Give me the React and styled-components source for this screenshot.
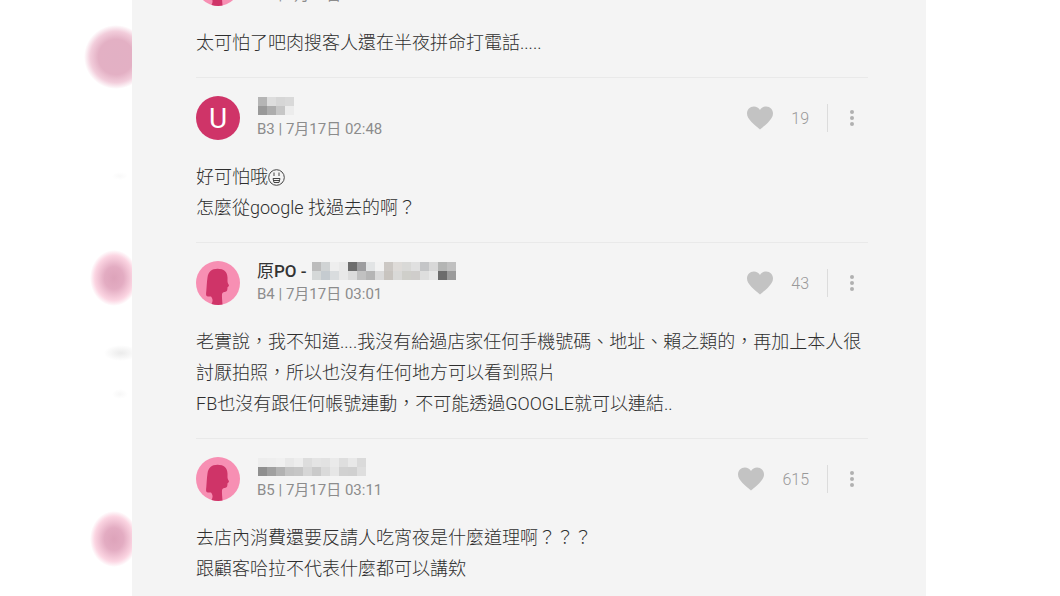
import React from "react";
import styled, { createGlobalStyle } from "styled-components";

const GlobalStyle = createGlobalStyle`
  * {
    box-sizing: border-box;
  }
  body {
    margin: 0;
    background: #fff;
    font-family: Roboto, "Noto Sans CJK TC", sans-serif;
  }
`;

const Page = styled.div`
  display: grid;
  grid-template-columns: 132px minmax(0, 1fr) 134px;
  height: 100vh;
  overflow: hidden;
`;

const Rail = styled.div`
  overflow: hidden;
`;

const Panel = styled.main`
  background: #f4f4f4;
  padding: 0 58px 0 64px;
  overflow: hidden;
`;

// the list is scrolled part way through B2
const CommentList = styled.div`
  margin-top: -57px;
`;

const Comment = styled.article`
  padding: 18px 0 19px;
  border-top: 1px solid #e9e9e9;
`;

const Header = styled.header`
  display: flex;
  align-items: center;
  height: 44px;
  margin-bottom: 21px;
`;

const Avatar = styled.svg`
  width: 44px;
  height: 44px;
  margin-right: 17px;
  flex: none;
`;

const LetterAvatar = styled.div`
  display: flex;
  align-items: center;
  justify-content: center;
  width: 44px;
  height: 44px;
  margin-right: 17px;
  border-radius: 50%;
  background: #cf3468;
  color: #fff;
  font-size: 28px;
`;

const Author = styled.div`
  flex: 1;
  min-width: 0;
`;

const Name = styled.div`
  display: flex;
  align-items: center;
  height: 22px;
  font-size: 17px;
  font-weight: 500;
  line-height: 22px;
  color: #333;
  white-space: pre;
`;

const Poster = styled.span`
  font-weight: 400;
`;

const Meta = styled.div`
  font-size: 15px;
  line-height: 24px;
  font-weight: 400;
  color: #8c8c8c;
`;

const Actions = styled.div`
  display: flex;
  align-items: center;
`;

const LikeButton = styled.button`
  display: flex;
  align-items: center;
  gap: 18px;
  padding: 0;
  border: 0;
  background: none;
  color: #999;
  font: 300 16px Roboto, sans-serif;
  cursor: pointer;
`;

const Divider = styled.span`
  width: 1px;
  height: 28px;
  margin: 0 8px 0 18px;
  background: #dcdcdc;
`;

const MoreButton = styled.button`
  display: flex;
  align-items: center;
  justify-content: center;
  width: 32px;
  height: 32px;
  padding: 0;
  border: 0;
  background: none;
  cursor: pointer;
`;

const Body = styled.p`
  margin: 0;
  font-size: 18px;
  font-weight: 300;
  line-height: 31px;
  color: #2e2e2e;
`;

const Face = styled.svg`
  width: 17px;
  height: 17px;
  vertical-align: -3px;
`;

const mosaics = {
  B3: [
    ["#b5b5b5", "#dddddd", "#d6d6d6", "#d9d9d9"],
    ["#999999", "#adadad", "#c6c6c6", "#ececec"],
  ],
  B4: [
    ["#bcbcbc", "#d0d3d4", "#eeeeee", "#e9e9e9", "#6d6d6d", "#9d9d9f", "#e2e4e5", "#f2f2f2", "#ccc8c4", "#dedbd8", "#d9d9d7", "#e0e0e0", "#c4c5c7", "#d8d8d8", "#b4b5b4", "#c0c0c0"],
    ["#d5d8d8", "#c5cbd0", "#d9dcde", "#e8e8e8", "#dcdcdc", "#c1c1c1", "#b5b5b5", "#dadada", "#c8c4bf", "#d9d9d7", "#cfcfca", "#cfcdcb", "#dedede", "#e7e7e7", "#6c6c6c", "#9b9b9b"],
  ],
  B5: [
    ["#ededed", "#eeeeee", "#f0f0f0", "#e8e8e8", "#ededed", "#dddddd", "#e4e4e4", "#e2e2e2", "#eaeaea", "#dedede", "#e8e8e8", "#dadada"],
    ["#8f8f8f", "#a0a0a0", "#b2b2b2", "#c3c3c3", "#c6c6c6", "#d6d6d6", "#cacaca", "#dadada", "#e6e6e6", "#d1d1d1", "#d0d0d0", "#dedede"],
  ],
};

const Mosaic = ({ rows }) => (
  <svg width={rows[0].length * 9 + 1} height="18" shapeRendering="crispEdges" aria-hidden="true">
    {rows.map((row, y) =>
      row.map((fill, x) => (
        <rect key={`${x}-${y}`} x={x * 9 + 1} y={y * 9} width="9" height="9" fill={fill} />
      ))
    )}
  </svg>
);

const GirlAvatar = () => (
  <Avatar viewBox="0 0 44 44" aria-hidden="true">
    <circle cx="22" cy="22" r="22" fill="#f78fb3" />
    <path
      d="M12 35.500C9.500 35.500 10 33 10.300 30C10.700 26 10.800 21 11.500 16.500C12.300 11 15.500 7.800 21.500 7.800C28 7.800 31.300 11 31.500 16.500C31.600 19.500 31.300 20.500 31.800 22C32.300 23.300 33.300 24 32.800 25C32.400 25.700 31.600 25.500 31.500 26.500C31.400 29 31.200 30.300 29.500 30.700C28 31 26.800 31 26.200 32.500C25.700 34.500 26 36.500 26.500 43.500Q21.500 44.600 15.500 43C17 40.500 17 38 15 35.500Q13.500 35.600 12 35.500Z"
      fill="#cf3468"
    />
  </Avatar>
);

const Heart = () => (
  <svg width="26" height="24" viewBox="0 0 26 24" aria-hidden="true">
    <path
      d="M13 23.500C11 21.500 7.500 19.500 4.500 16C1.800 13 0 10.500 0 7.500C0 3.500 3 .5 6.800 .5C9.500 .5 11.700 1.800 13 4C14.300 1.800 16.500 .5 19.200 .5C23 .5 26 3.500 26 7.500C26 10.500 24.200 13 21.500 16C18.500 19.500 15 21.500 13 23.500Z"
      fill="#c3c3c3"
    />
  </svg>
);

const Dots = () => (
  <svg width="6" height="18" viewBox="0 0 6 18" fill="#b0b0b0" aria-hidden="true">
    <circle cx="3" cy="3" r="2" />
    <circle cx="3" cy="9" r="2" />
    <circle cx="3" cy="15" r="2" />
  </svg>
);

const ShockedFace = () => (
  <Face viewBox="0 0 17 17" fill="none" stroke="#444" role="img" aria-label="驚">
    <circle cx="8.500" cy="8.500" r="7.800" />
    <path d="M6 3.500V7M11 3.500V7M5 9.500H12M5.500 11.500H11.500M6 13.500H11M5 9.500L6 13.500M12 9.500L11 13.500" />
  </Face>
);

const Blurs = () => (
  <svg width="132" height="596" viewBox="0 0 132 596" aria-hidden="true">
    <defs>
      <radialGradient id="wide">
        <stop offset="0" stopColor="#e2b0c4" />
        <stop offset="0.55" stopColor="#e3b0c4" />
        <stop offset="0.8" stopColor="#f2cddb" />
        <stop offset="1" stopColor="#fff" />
      </radialGradient>
      <radialGradient id="small">
        <stop offset="0" stopColor="#dda3ba" />
        <stop offset="0.4" stopColor="#e3acc2" />
        <stop offset="0.8" stopColor="#fbd5e2" />
        <stop offset="1" stopColor="#fff" />
      </radialGradient>
      <radialGradient id="grey">
        <stop offset="0" stopColor="#ebebeb" />
        <stop offset="1" stopColor="#fff" />
      </radialGradient>
    </defs>
    <circle cx="116" cy="57" r="32" fill="url(#wide)" />
    <ellipse cx="114" cy="278" rx="24" ry="28" fill="url(#small)" />
    <ellipse cx="114" cy="539" rx="24" ry="28" fill="url(#small)" />
    <ellipse cx="121" cy="353" rx="17" ry="8" fill="url(#grey)" />
    <ellipse cx="120" cy="394" rx="8" ry="5" fill="url(#grey)" opacity="0.4" />
    <ellipse cx="120" cy="176" rx="8" ry="4" fill="url(#grey)" opacity="0.3" />
  </svg>
);

const comments = [
  {
    id: "B2",
    time: "7月17日 02:45",
    likes: 12,
    lines: ["太可怕了吧肉搜客人還在半夜拼命打電話....."],
  },
  {
    id: "B3",
    letter: "U",
    time: "7月17日 02:48",
    likes: 19,
    lines: [
      <>
        好可怕哦
        <ShockedFace />
      </>,
      "怎麼從google 找過去的啊？",
    ],
  },
  {
    id: "B4",
    poster: true,
    time: "7月17日 03:01",
    likes: 43,
    lines: [
      "老實說，我不知道....我沒有給過店家任何手機號碼、地址、賴之類的，再加上本人很討厭拍照，所以也沒有任何地方可以看到照片",
      "FB也沒有跟任何帳號連動，不可能透過GOOGLE就可以連結..",
    ],
  },
  {
    id: "B5",
    time: "7月17日 03:11",
    likes: 615,
    lines: ["去店內消費還要反請人吃宵夜是什麼道理啊？？？", "跟顧客哈拉不代表什麼都可以講欸"],
  },
];

const CommentItem = ({ id, letter, poster, time, likes, lines }) => (
  <Comment>
    <Header>
      {letter ? <LetterAvatar>{letter}</LetterAvatar> : <GirlAvatar />}
      <Author>
        <Name>
          {poster && (
            <>
              <Poster>原</Poster>
              {"PO - "}
            </>
          )}
          {mosaics[id] && <Mosaic rows={mosaics[id]} />}
        </Name>
        <Meta>
          {id} | {time}
        </Meta>
      </Author>
      <Actions>
        <LikeButton type="button">
          <Heart />
          {likes}
        </LikeButton>
        <Divider />
        <MoreButton type="button" aria-label="更多">
          <Dots />
        </MoreButton>
      </Actions>
    </Header>
    {lines.map((line, i) => (
      <Body key={i}>{line}</Body>
    ))}
  </Comment>
);

const App = () => {
  return (
    <>
      <GlobalStyle />
      <Page>
        <Rail>
          <Blurs />
        </Rail>
        <Panel>
          <CommentList>
            {comments.map((c) => (
              <CommentItem key={c.id} {...c} />
            ))}
          </CommentList>
        </Panel>
      </Page>
    </>
  );
};

export default App;
